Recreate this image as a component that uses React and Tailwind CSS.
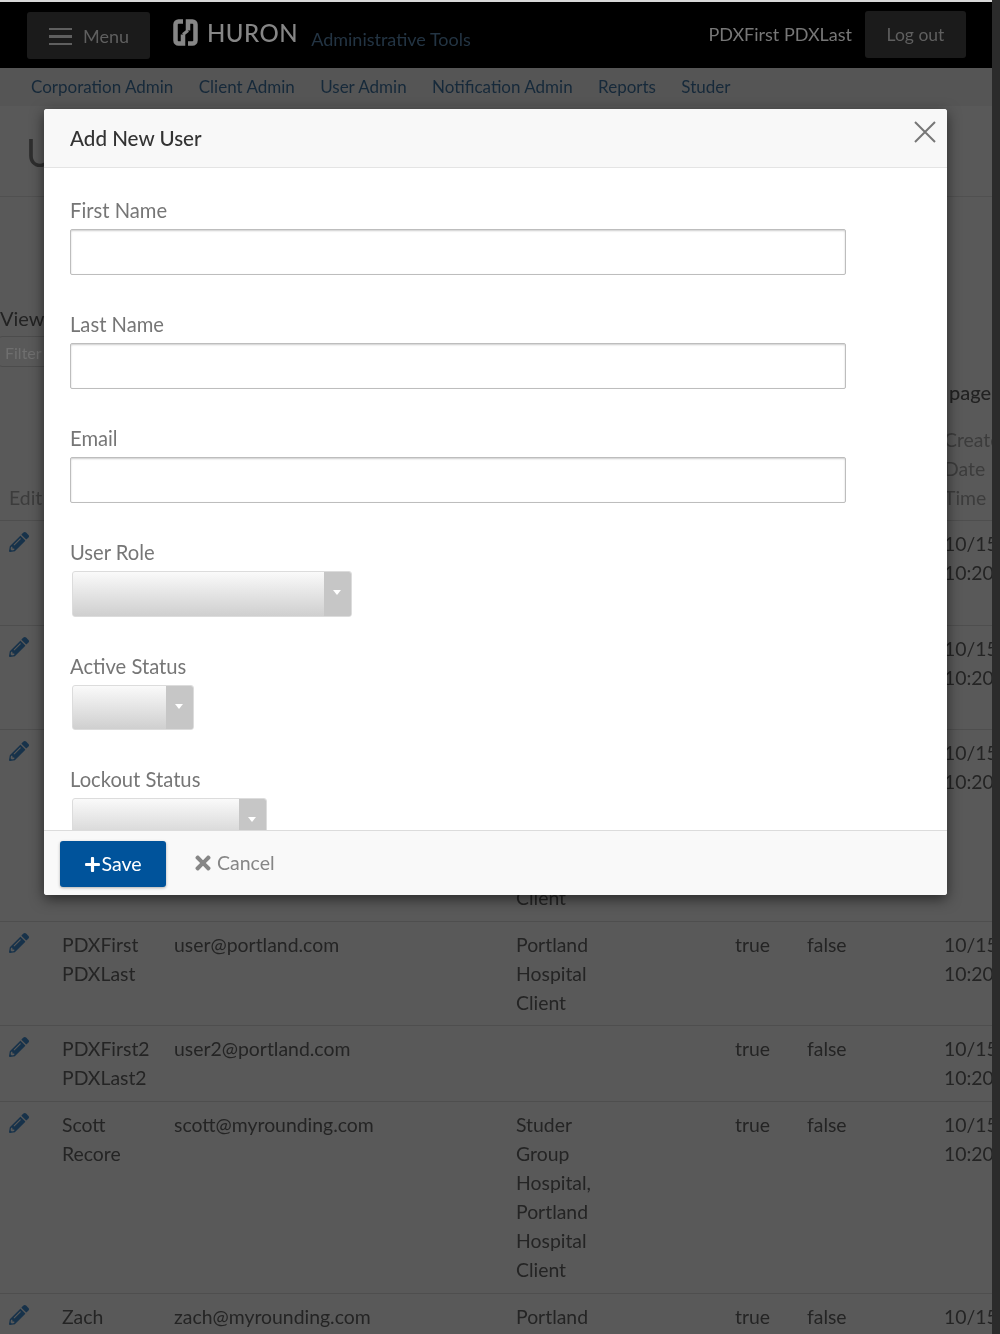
import React from 'react'
import { FaPencilAlt, FaPlus, FaTimes } from 'react-icons/fa'

const NAV_ITEMS = ['Corporation Admin', 'Client Admin', 'User Admin', 'Notification Admin', 'Reports', 'Studer']

// only what shows around the modal is filled in, the first rows sit behind it
const USERS = [
    { height: 'h-[105px]', name: [], email: '', client: [], active: '', locked: '' },
    { height: 'h-[104px]', name: [], email: '', client: [], active: '', locked: '' },
    { height: 'h-[192px]', name: [], email: '', client: ['Studer', 'Group', 'Hospital,', 'Portland', 'Hospital', 'Client'], active: '', locked: '' },
    { height: 'h-[104px]', name: ['PDXFirst', 'PDXLast'], email: 'user@portland.com', client: ['Portland', 'Hospital', 'Client'], active: 'true', locked: 'false' },
    { height: 'h-[76px]', name: ['PDXFirst2', 'PDXLast2'], email: 'user2@portland.com', client: [], active: 'true', locked: 'false' },
    { height: 'h-[192px]', name: ['Scott', 'Recore'], email: 'scott@myrounding.com', client: ['Studer', 'Group', 'Hospital,', 'Portland', 'Hospital', 'Client'], active: 'true', locked: 'false' },
    { height: 'h-[104px]', name: ['Zach'], email: 'zach@myrounding.com', client: ['Portland'], active: 'true', locked: 'false' },
]

const Lines = ({ items }) => items.map((line) => <div key={line}>{line}</div>)

const TextField = ({ label }) => (
    <div className="mb-[35px]">
        <label className="block h-[29px] mb-[4px] text-[20.2px] leading-[29px] text-[#767676]">{label}</label>
        <input type="text" className="block w-[776px] h-[46px] bg-white border border-[#bdbdbd] rounded-[2px] shadow-[inset_0_1px_2px_rgba(0,0,0,0.2)]" />
    </div>
)

const SelectField = ({ label, width, height, mb }) => (
    <div className={mb}>
        <label className="block h-[29px] mb-[4px] text-[20.2px] leading-[29px] text-[#767676]">{label}</label>
        <div className={`${width} ${height} ml-[2px] flex rounded-[3px] overflow-hidden border border-[#dcdcdc] bg-gradient-to-b from-[#fafafa] to-[#cfcfcf]`}>
            <div className="flex-1" />
            <div className="w-[27px] flex items-center justify-center bg-[#c6c6c6]">
                <div className="w-0 h-0 -mt-[3px] -ml-[2px] border-x-[4px] border-x-transparent border-t-[5px] border-t-white" />
            </div>
        </div>
    </div>
)

const HuronLogo = () => (
    <svg width="25" height="27" viewBox="0 0 25 27" fill="none" stroke="#868686" strokeWidth="4.5" className="shrink-0 -mt-[2px]">
        <path d="M10 2.5H5.5a3 3 0 0 0-3 3v16a3 3 0 0 0 3 3H10V15.5" />
        <path d="M15 11.5V2.5h4.5a3 3 0 0 1 3 3v16a3 3 0 0 1-3 3H15" />
        <path d="M10 15.5L15 11.5" strokeWidth="3" />
    </svg>
)

const App = () => {
    return (
        <div className="relative flex w-[1000px] h-[1334px] overflow-hidden bg-[#2b2b2b] font-['Lato',sans-serif] blur-[0.7px]">
            <div className="w-[992px] h-full overflow-hidden bg-[#595959]">
                <div className="h-[2px] bg-[#d8d8d8]" />

                {/* Top bar */}
                <header className="h-[66px] bg-black flex items-center pl-[27px] pr-[26px]">
                    <button className="w-[123px] h-[47px] pt-[3px] flex items-center gap-[11px] pl-[22px] rounded-[3px] bg-[#1b1b1b] text-[#5f5f5f] text-[18px]">
                        <span className="flex flex-col gap-[5px]">
                            <span className="block w-[23px] h-[2.5px] bg-[#5f5f5f]" />
                            <span className="block w-[23px] h-[2.5px] bg-[#5f5f5f]" />
                            <span className="block w-[23px] h-[2.5px] bg-[#5f5f5f]" />
                        </span>
                        Menu
                    </button>
                    <div className="ml-[23px] flex items-center mb-[3px]">
                        <HuronLogo />
                        <span className="ml-[9px] -mt-[2px] text-[24px] tracking-[0.5px] text-[#868686] font-medium">HURON</span>
                        <span className="ml-[13px] mt-[12px] text-[18px] text-[#233443]">Administrative Tools</span>
                    </div>
                    <span className="ml-auto text-[18px] mb-[2px] text-[#777]">PDXFirst PDXLast</span>
                    <button className="ml-[13px] w-[101px] h-[47px] mb-[2px] pt-[2px] rounded-[3px] bg-[#1b1b1b] text-[#5f5f5f] text-[17.5px]">Log out</button>
                </header>

                {/* Section links */}
                <nav className="h-[38px] bg-[#555] flex items-center gap-[25.4px] pl-[31px] text-[17px] text-[#16293a]">
                    {NAV_ITEMS.map((item) => (
                        <span key={item}>{item}</span>
                    ))}
                </nav>

                <div className="h-[91px] border-b border-[#505050] pl-[26px] pt-[21px] text-[38px] leading-[50px] text-[#2e2e2e]">Users</div>

                <div className="pt-[107px] text-[20px] leading-[29px] text-[#222]">View</div>
                <div className="mt-[3px] w-[60px] h-[31px] -ml-[2px] pl-[6px] border border-[#4c4c4c] rounded-[4px] text-[16px] leading-[32px] text-[#6f6f6f]">Filter</div>
                <div className="mt-[11px] ml-auto w-[43px] text-[20px] leading-[29px] text-[#222] font-medium">page</div>

                {/* Users table */}
                <table className="mt-[18px] w-[1140px] table-fixed text-left text-[19.4px] leading-[29px] text-[#242424]">
                    <colgroup>
                        <col className="w-[53px]" />
                        <col className="w-[112px]" />
                        <col className="w-[342px]" />
                        <col className="w-[219px]" />
                        <col className="w-[72px]" />
                        <col className="w-[137px]" />
                        <col className="w-[205px]" />
                    </colgroup>
                    <thead className="text-[#3c3c3c]">
                        <tr className="align-bottom">
                            <th className="pl-[9px] pb-[8px] font-normal">Edit</th>
                            <th colSpan="5" />
                            <th className="pl-[9px] pb-[8px] font-normal">Create<br />Date<br />Time</th>
                        </tr>
                    </thead>
                    <tbody>
                        {USERS.map((user, i) => (
                            <tr key={i} className={`${user.height} align-top border-t border-[#4e4e4e]`}>
                                <td className="pl-[9px] pt-[7px]">
                                    <FaPencilAlt className="mt-[4px] w-[20px] h-[20px] text-[#17324a]" />
                                </td>
                                <td className="pl-[9px] pt-[8px]"><Lines items={user.name} /></td>
                                <td className="pl-[9px] pt-[8px]">{user.email}</td>
                                <td className="pl-[9px] pt-[8px]"><Lines items={user.client} /></td>
                                <td className="pl-[9px] pt-[8px]">{user.active}</td>
                                <td className="pl-[9px] pt-[8px]">{user.locked}</td>
                                <td className="pl-[9px] pt-[8px]">10/15/2015<br />10:20 AM</td>
                            </tr>
                        ))}
                    </tbody>
                </table>
            </div>
            <div className="w-[8px] h-full bg-[#2b2b2b]" />

            {/* Add user modal */}
            <div className="absolute left-[44px] top-[109px] w-[903px] h-[786px] flex flex-col bg-white rounded-[3px] overflow-hidden shadow-[0_4px_14px_rgba(0,0,0,0.55)]">
                <div className="relative h-[59px] shrink-0 flex items-center pl-[26px] bg-[#f8f8f8] border-b border-[#e4e4e4]">
                    <h2 className="text-[20.6px] font-medium text-[#333]">Add New User</h2>
                    <svg width="22" height="22" viewBox="0 0 22 22" className="absolute right-[11px] top-[12px]">
                        <path d="M1 1l20 20M21 1L1 21" stroke="#777" strokeWidth="2" fill="none" />
                    </svg>
                </div>
                <div className="flex-1 overflow-hidden pl-[26px] pt-[28px]">
                    <TextField label="First Name" />
                    <TextField label="Last Name" />
                    <TextField label="Email" />
                    <SelectField label="User Role" width="w-[280px]" height="h-[46px]" mb="mb-[35px]" />
                    <SelectField label="Active Status" width="w-[122px]" height="h-[45px]" mb="mb-[35px]" />
                    <SelectField label="Lockout Status" width="w-[195px]" height="h-[45px]" mb="mb-0" />
                </div>
                <div className="h-[65px] shrink-0 flex items-center pl-[16px] bg-[#f9f9f9] border-t border-[#dcdcdc]">
                    <button className="w-[106px] h-[46px] mt-[2px] flex items-center justify-center rounded-[3px] bg-[#00539b] text-white text-[19.6px] shadow-[0_1px_3px_rgba(0,0,0,0.3)]">
                        <FaPlus className="w-[17px] h-[17px]" />
                        Save
                    </button>
                    <button className="ml-[26px] flex items-center gap-[3px] text-[#868686] text-[19.5px]">
                        <FaTimes className="w-[22px] h-[22px]" />
                        Cancel
                    </button>
                </div>
            </div>
        </div>
    )
}

export default App
